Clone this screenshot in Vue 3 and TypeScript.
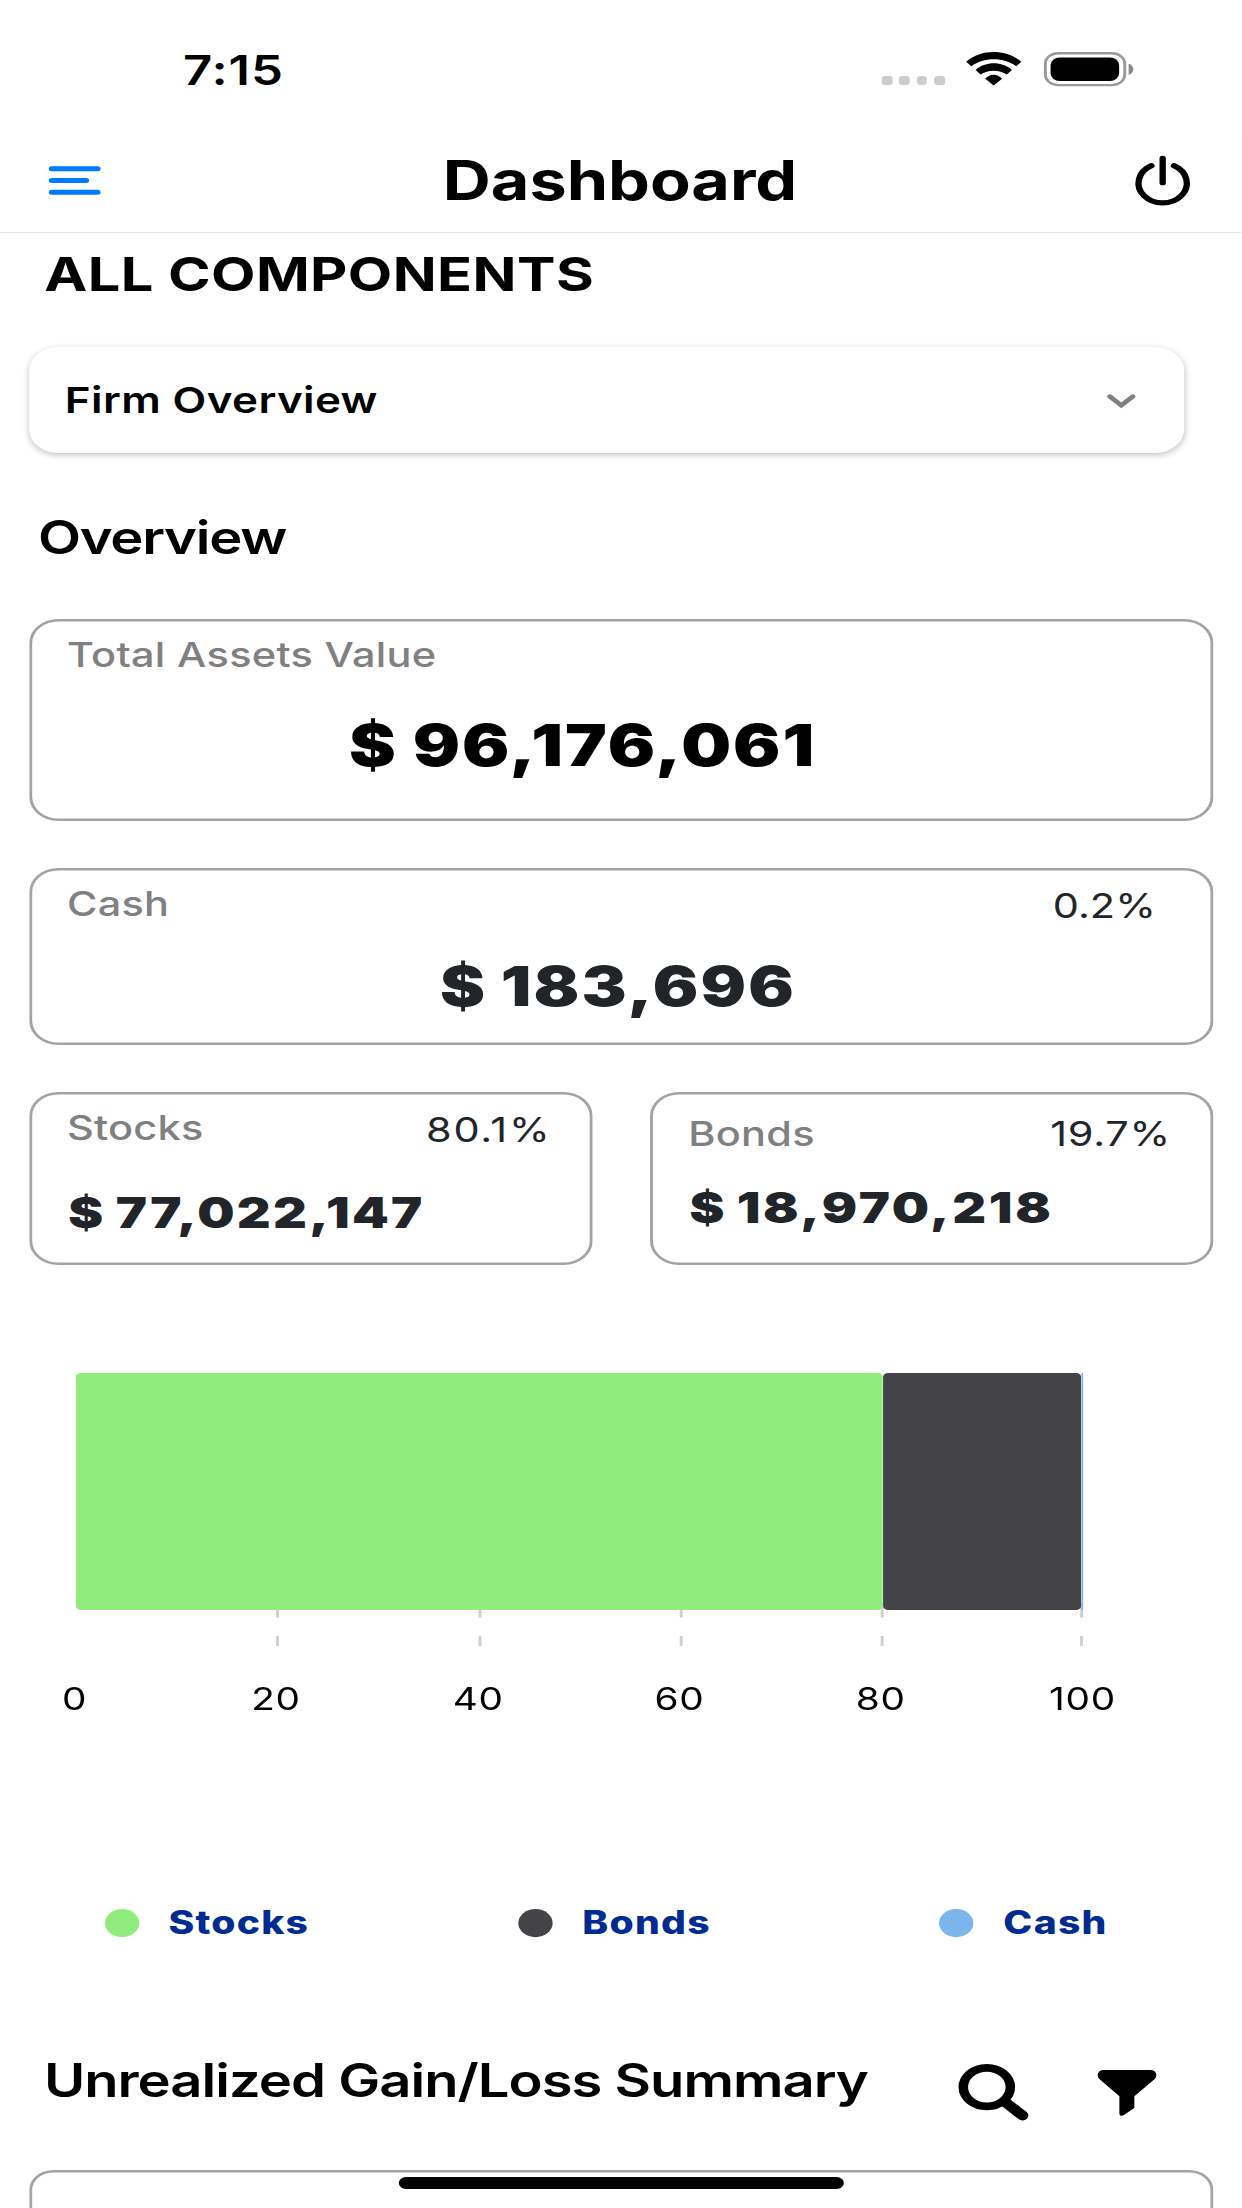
<script setup lang="ts">
interface Slice {
  name: string
  share: number
  color: string
}

const slices: Slice[] = [
  { name: 'Stocks', share: 80.1, color: '#90ed7d' },
  { name: 'Bonds', share: 19.7, color: '#434348' },
  { name: 'Cash', share: 0.2, color: '#7cb5ec' },
]

const plotLeft = 62.3
const plotWidth = 825.9

const bars = slices.map((s, i) => {
  const before = slices.slice(0, i).reduce((sum, p) => sum + p.share, 0)
  return {
    ...s,
    x: plotLeft + (before / 100) * plotWidth + (i ? 0.3 : 0),
    width: (s.share / 100) * plotWidth - (i ? 0.3 : 0),
    radius: s.share > 1 ? 4 : 0,
  }
})

const ticks = [
  { value: 0, label: 61.2, line: 0 },
  { value: 20, label: 226.3, line: 227.6 },
  { value: 40, label: 392.1, line: 393.6 },
  { value: 60, label: 557.2, line: 558.6 },
  { value: 80, label: 722.2, line: 723.4 },
  { value: 100, label: 887.6, line: 886.9 },
]
</script>

<template>
  <div class="screen">
    <div class="status">
      <span class="time">7:15</span>
      <div class="indicators">
        <div class="signal"><i v-for="n in 4" :key="n"></i></div>
        <svg class="wifi" viewBox="0 0 45.8 33.6">
          <path d="M.3 9.7C12.5-3.2 33-3.2 45.5 9.7L41.3 14.2C31 5 14.8 5 4.5 14.2Z" />
          <path d="M8 18C16 9.1 29.8 9.1 37.8 18L33.6 22.5C27.6 17.4 18 17.4 12.1 22.5Z" />
          <path d="M15.9 26.7C19.7 21.4 25.9 21.4 29.7 26.7L22.8 33.6Z" />
        </svg>
        <svg class="battery" viewBox="0 0 73.3 34.3">
          <rect x="1.2" y="1.2" width="65.1" height="31.9" rx="10.5" fill="none" stroke="#999" stroke-width="2.4" />
          <rect x="5.5" y="5.5" width="56.2" height="23.4" rx="7.5" />
          <path d="M69.5 11.7C72 12.5 73.3 14.8 73.3 17.3S72 22.2 69.5 23Z" fill="#8a8a8a" />
        </svg>
      </div>
    </div>

    <header class="nav">
      <svg class="menu" viewBox="0 0 42.5 29" stroke="#007aff" stroke-width="5" stroke-linecap="round">
        <path d="M2.5 2.7H40M2.5 14.5H30.6M2.5 26.3H40" />
      </svg>
      <span class="title">Dashboard</span>
      <svg class="power" viewBox="0 0 44.8 50" fill="none" stroke="#000" stroke-width="5.2" stroke-linecap="round">
        <path d="M13.2 10.6A19.8 19.8 0 1 0 31.6 10.6M22.4 3.4V27.7" />
      </svg>
    </header>

    <main>
      <h1>ALL COMPONENTS</h1>

      <div class="select">
        <span>Firm Overview</span>
        <svg viewBox="0 0 23 14" fill="none" stroke="#808080" stroke-width="4.2" stroke-linecap="round">
          <path d="M2 2.4L11.5 11.3L21 2.4" />
        </svg>
      </div>

      <h2>Overview</h2>

      <section class="card total">
        <div class="row"><span class="label">Total Assets Value</span></div>
        <div class="value">$ 96,176,061</div>
      </section>

      <section class="card cash">
        <div class="row">
          <span class="label">Cash</span><span class="pct">0.2%</span>
        </div>
        <div class="value">$ 183,696</div>
      </section>

      <div class="pair">
        <section class="card stocks">
          <div class="row">
            <span class="label">Stocks</span><span class="pct">80.1%</span>
          </div>
          <div class="value">$ 77,022,147</div>
        </section>
        <section class="card bonds">
          <div class="row">
            <span class="label">Bonds</span><span class="pct">19.7%</span>
          </div>
          <div class="value">$ 18,970,218</div>
        </section>
      </div>

      <svg class="chart" viewBox="0 0 1018.4 350">
        <g stroke="#cfcfcf" stroke-width="2.4">
          <template v-for="t in ticks" :key="t.value">
            <path v-if="t.line" :d="`M${t.line} 230V244.6M${t.line} 263V273`" />
          </template>
        </g>
        <rect
          v-for="b in bars"
          :key="b.name"
          :x="b.x"
          y="0"
          :width="b.width"
          height="237"
          :rx="b.radius"
          :fill="b.color"
        />
        <text v-for="t in ticks" :key="t.value" class="tick" :x="t.label" y="337.3">{{ t.value }}</text>
      </svg>

      <ul class="legend">
        <li v-for="s in slices" :key="s.name">
          <svg viewBox="0 0 28 28"><circle cx="14" cy="14" r="14" :fill="s.color" /></svg>
          {{ s.name }}
        </li>
      </ul>

      <div class="summary">
        <h2>Unrealized Gain/Loss Summary</h2>
        <svg class="search" viewBox="0 0 57.5 56.7" fill="none" stroke="#000" stroke-linecap="round">
          <circle cx="23.2" cy="23.1" r="19.3" stroke-width="7.8" />
          <path d="M38.5 38.2L52.5 51.6" stroke-width="9.6" />
        </svg>
        <svg class="filter" viewBox="0 0 48.4 46">
          <path d="M5 0H43.4C47.6 0 49.9 5 46.9 8.9L30.2 26.3V37Q30.2 37.9 29.5 38.4L21.3 45.2Q17.9 47 17.9 43.6V26.3L1.5 8.9C-1.5 5 .8 0 5 0Z" />
        </svg>
      </div>

      <section class="card next"></section>
    </main>

    <div class="home-bar"></div>
  </div>
</template>

<style>
body {
  margin: 0;
  background: #fff;
}
</style>

<style scoped>
.screen {
  position: relative;
  width: 1018.4px;
  height: 2208px;
  overflow: hidden;
  background: #fff;
  color: #000;
  font-family: Inter, "Liberation Sans", sans-serif;
  transform: scaleX(1.2195);
  transform-origin: 0 0;
}

svg {
  display: block;
  flex: none;
  overflow: visible;
}

h1,
h2,
ul {
  margin: 0;
  padding: 0;
}

.status {
  display: flex;
  justify-content: space-between;
  align-items: center;
  height: 138.6px;
  padding: 0 89.3px 0 150px;
  box-sizing: border-box;
}

.time {
  padding-top: 1px;
  font-size: 41.7px;
  font-weight: 600;
  letter-spacing: 0.78px;
}

.indicators {
  display: flex;
  align-items: center;
  gap: 17.7px;
}

.signal {
  display: flex;
  gap: 5.4px;
  margin-top: 22px;
}

.signal i {
  width: 8.8px;
  height: 9px;
  border-radius: 3px;
  background: #ccc;
}

.wifi {
  width: 45.8px;
  height: 33.6px;
}

.battery {
  width: 73.3px;
  height: 34.3px;
}

.nav {
  display: flex;
  justify-content: space-between;
  align-items: center;
  height: 93.4px;
  padding: 0 42.5px 11px 40.3px;
  box-sizing: border-box;
  box-shadow: 0 1px 0 #e2e2e2;
}

.menu {
  width: 42.5px;
  height: 29px;
  padding-top: 1px;
}

.title {
  padding-left: 3px;
  font-size: 54.5px;
  font-weight: 700;
  line-height: 60px;
}

.power {
  width: 44.8px;
  height: 50px;
}

h1 {
  margin: 11.8px 0 0 36.3px;
  font-size: 47.3px;
  font-weight: 700;
  line-height: 60px;
  letter-spacing: 0.35px;
}

.select {
  display: flex;
  justify-content: space-between;
  align-items: center;
  width: 947.3px;
  height: 106.6px;
  margin: 42.9px 0 0 23.7px;
  padding: 0 40.3px 0 29.5px;
  box-sizing: border-box;
  border-radius: 23.5px;
  background: #fff;
  box-shadow: 0 2px 6px rgba(0, 0, 0, 0.24);
  font-size: 36px;
  font-weight: 600;
  letter-spacing: 0.32px;
}

.select svg {
  width: 23px;
  height: 14px;
  margin-top: 2px;
}

h2 {
  margin: 53.3px 0 0 31.1px;
  font-size: 46px;
  font-weight: 600;
  line-height: 60px;
  letter-spacing: -1.05px;
}

.card {
  box-sizing: border-box;
  margin: 0 23.7px;
  padding: 16.3px 0 0 31.2px;
  border-radius: 24px;
  box-shadow: inset 0 0 0 2.4px #a3a3a3;
}

.row {
  display: flex;
  justify-content: space-between;
  align-items: flex-start;
  height: 40px;
  font-size: 34px;
  line-height: 40px;
}

.label {
  color: #808080;
  font-weight: 500;
  letter-spacing: 0.25px;
}

.pct {
  margin-top: 2.2px;
  color: #212529;
}

.value {
  color: #212529;
  font-weight: 900;
  line-height: 60px;
  white-space: nowrap;
}

.total {
  height: 202px;
  margin-top: 52.4px;
}

.total .value {
  margin: 39.8px 0 0 231.4px;
  color: #000;
  font-size: 57.6px;
  letter-spacing: 1.65px;
  word-spacing: -1px;
}

.cash {
  height: 177px;
  margin-top: 46.7px;
  padding-right: 46.9px;
}

.cash .value {
  margin: 31.6px 0 0 306px;
  font-size: 55.4px;
  letter-spacing: 1.8px;
  word-spacing: -1.8px;
}

.pair {
  display: flex;
  justify-content: space-between;
  margin: 47.3px 23.7px 0;
}

.pair .card {
  width: 462px;
  height: 172.6px;
  margin: 0;
}

.pair .value {
  margin-left: 1.2px;
  line-height: 50px;
}

.stocks {
  padding-right: 33.6px;
}

.stocks .pct {
  letter-spacing: 1.4px;
}

.stocks .value {
  margin-top: 39.2px;
  font-size: 43px;
  letter-spacing: 1.85px;
  word-spacing: -2px;
}

.card.bonds {
  padding-top: 22.4px;
  padding-right: 34.6px;
  padding-left: 31.6px;
}

.bonds .pct {
  margin-top: 0;
  letter-spacing: 0.57px;
}

.bonds .value {
  margin-top: 28px;
  font-size: 43px;
  letter-spacing: 2.2px;
  word-spacing: -3px;
}

.chart {
  width: 1018.4px;
  height: 350px;
  margin-top: 108.4px;
}

.tick {
  font-size: 31.8px;
  letter-spacing: 0.6px;
  text-anchor: middle;
}

.legend {
  display: grid;
  grid-template-columns: 339.4px 345.3px auto;
  margin: 180.4px 0 0 85.5px;
  color: #002b91;
  font-size: 32px;
  font-weight: 800;
  line-height: 40px;
  letter-spacing: 1.05px;
  list-style: none;
}

.legend li {
  display: flex;
  align-items: center;
  gap: 24.4px;
}

.legend svg {
  width: 28.2px;
  height: 28.2px;
}

.summary {
  display: flex;
  align-items: flex-start;
  height: 119.5px;
  margin-top: 107.1px;
}

.summary h2 {
  width: 750px;
  margin: 0 0 0 36px;
  letter-spacing: -0.8px;
  white-space: nowrap;
}

.search {
  width: 57.5px;
  height: 56.7px;
  margin-top: 13.2px;
}

.filter {
  width: 48.4px;
  height: 46px;
  margin: 19.6px 0 0 56.2px;
}

.next {
  height: 120px;
  border-radius: 20px;
}

.home-bar {
  position: absolute;
  top: 2177px;
  left: 326.7px;
  width: 365.1px;
  height: 12px;
  border-radius: 6px;
  background: #000;
}
</style>
